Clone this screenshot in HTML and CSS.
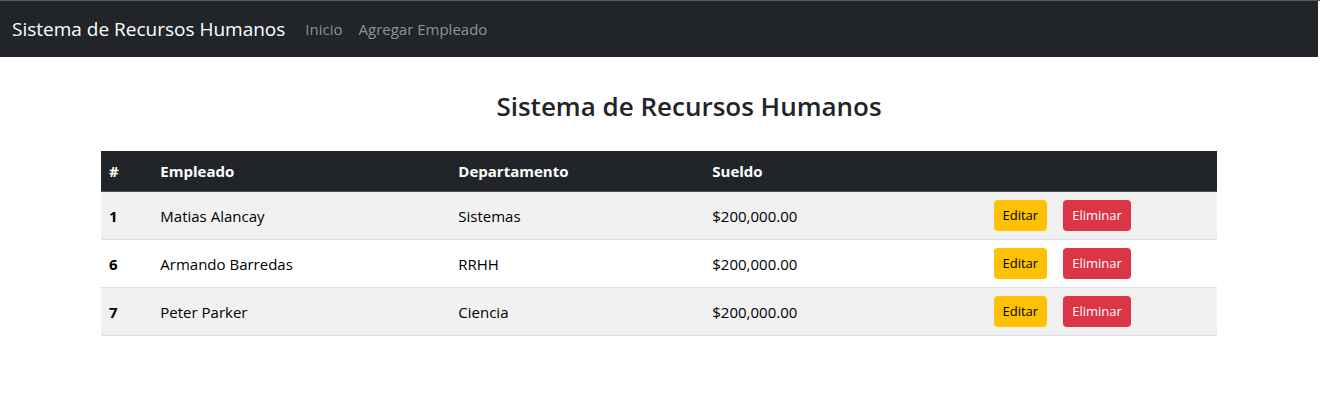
FILE: index.html
```html
<!DOCTYPE html>
<html lang="es">
<head>
<meta charset="utf-8">
<title>Sistema de Recursos Humanos</title>
<link rel="stylesheet" href="styles.css">
</head>
<body>
<nav class="navbar">
  <a class="brand" href="#">Sistema de Recursos Humanos</a>
  <a class="nav-link" href="#">Inicio</a>
  <a class="nav-link" href="#">Agregar Empleado</a>
</nav>
<main class="container">
  <h1 class="title">Sistema de Recursos Humanos</h1>
  <table class="table">
    <colgroup><col class="col-id"><col class="col-name"><col class="col-dept"><col class="col-pay"><col></colgroup>
    <thead>
      <tr><th scope="col">#</th><th scope="col">Empleado</th><th scope="col">Departamento</th><th scope="col">Sueldo</th><th></th></tr>
    </thead>
    <tbody>
      <tr><th scope="row">1</th><td>Matias Alancay</td><td>Sistemas</td><td>$200,000.00</td><td><div class="actions"><a class="btn btn-edit" href="#">Editar</a><a class="btn btn-delete" href="#">Eliminar</a></div></td></tr>
      <tr><th scope="row">6</th><td>Armando Barredas</td><td>RRHH</td><td>$200,000.00</td><td><div class="actions"><a class="btn btn-edit" href="#">Editar</a><a class="btn btn-delete" href="#">Eliminar</a></div></td></tr>
      <tr><th scope="row">7</th><td>Peter Parker</td><td>Ciencia</td><td>$200,000.00</td><td><div class="actions"><a class="btn btn-edit" href="#">Editar</a><a class="btn btn-delete" href="#">Eliminar</a></div></td></tr>
    </tbody>
  </table>
</main>
</body>
</html>
```
FILE: styles.css
```css
* { box-sizing: border-box; }
body {
  margin: 0;
  background: #fff;
  color: #212529;
  font: 15px/24px "Segoe UI", "Open Sans", "Noto Sans", sans-serif;
  border-top: 1px solid #5a5e62;
}
.navbar {
  display: flex;
  align-items: center;
  height: 56px;
  margin-right: 2px;
  padding: 0 12px;
  gap: 16px;
  background: #212529;
}
.navbar a { text-decoration: none; }
.brand { color: #fff; font-size: 19px; margin-right: 4px; }
.nav-link { color: #909294; }
.container {
  max-width: 1140px;
  margin: 0 auto;
  padding: 32px 13px 0 11px;
}
.title {
  margin: 0 0 28px;
  padding-left: 60px;
  text-align: center;
  font-size: 26px;
  line-height: 34px;
  font-weight: 600;
}
.table {
  width: 100%;
  table-layout: fixed;
  border-collapse: separate;
  border-spacing: 0;
  color: #000;
}
.col-id { width: 4.6%; }
.col-name { width: 26.7%; }
.col-dept { width: 22.76%; }
.col-pay { width: 25.2%; }
.table th, .table td {
  padding: 8px;
  text-align: left;
  vertical-align: middle;
  border-bottom: 1px solid #dee0e2;
}
.table th { font-weight: 700; }
.table thead th { background: #212529; color: #fff; border-bottom-color: #4d5154; }
.table tbody tr:nth-child(odd) { background: #f1f1f1; }
.actions { display: flex; gap: 16px; }
.btn {
  padding: 5px 9px;
  border-radius: 4px;
  font-size: 13px;
  line-height: 21px;
  text-decoration: none;
}
.btn-edit { background: #ffc107; color: #000; }
.btn-delete { background: #dc3545; color: #fff; }
```
